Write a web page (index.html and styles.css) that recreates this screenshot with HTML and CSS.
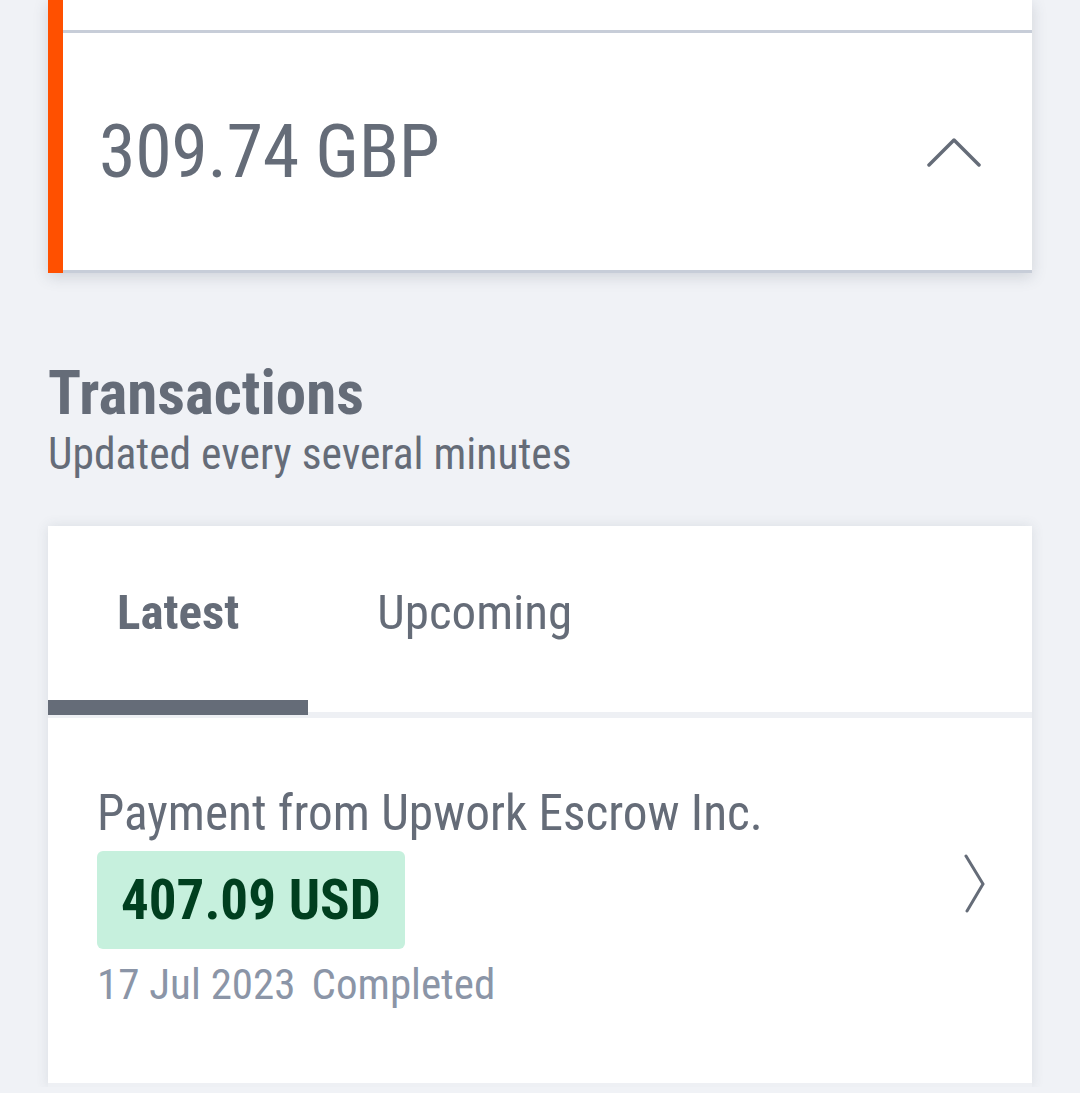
FILE: index.html
```html
<!DOCTYPE html>
<html lang="en">
<head>
  <meta charset="UTF-8" />
  <title>Balance</title>
  <link rel="stylesheet" href="styles.css">
</head>
<body>
<div class="page">
  <div class="balance-card">
    <div class="balance-inner">
      <div class="card-top"></div>
      <div class="balance-row">
        <span class="balance-amount">309.74 GBP</span>
        <svg class="chevron-up" width="56" height="32" viewBox="0 0 56 32">
          <polyline points="2,28 27,3 52,28" fill="none" stroke="#656c78" stroke-width="3.5" stroke-linecap="round" stroke-linejoin="round"/>
        </svg>
      </div>
    </div>
  </div>

  <h2 class="section-title">Transactions</h2>
  <div class="section-sub">Updated every several minutes</div>

  <div class="tx-card">
    <div class="tabs">
      <div class="tab active">Latest</div>
      <div class="tab">Upcoming</div>
    </div>
    <div class="tx-row">
      <div class="tx-info">
        <div class="tx-name">Payment from Upwork Escrow Inc.</div>
        <div class="tx-amount">407.09 USD</div>
        <div class="tx-meta">
          <span>17 Jul 2023</span>
          <span>Completed</span>
        </div>
      </div>
      <svg class="chevron-right" width="24" height="60" viewBox="0 0 24 60">
        <polyline points="3,2 20,30 4,57" fill="none" stroke="#656c78" stroke-width="3" stroke-linecap="round" stroke-linejoin="miter"/>
      </svg>
    </div>
  </div>
</div>
</body>
</html>
```

FILE: styles.css
```css
body {
  margin: 0;
  background: #f0f2f6;
  font-family: "Roboto Condensed", Roboto, "Liberation Sans", sans-serif;
  font-stretch: condensed;
  color: #656c78;
  overflow: hidden;
}
.page {
  padding: 0 48px;
}
.balance-card {
  background: #ff5000;
  padding-left: 15px;
  box-shadow: 0 4px 14px rgba(60, 70, 90, 0.18);
}
.balance-inner {
  background: #fff;
  border-bottom: 3px solid #c7cdd8;
}
.card-top {
  height: 30px;
  border-bottom: 3px solid #c7cdd8;
}
.balance-row {
  height: 237px;
  display: flex;
  align-items: center;
  justify-content: space-between;
  padding: 0 49px 0 36px;
}
.balance-amount {
  font-size: 74px;
  line-height: 90px;
  letter-spacing: -0.4px;
}
.chevron-up {
  margin-top: 2px;
}
.section-title {
  margin: 86px 0 0;
  font-size: 61px;
  line-height: 68px;
  font-weight: 700;
}
.section-sub {
  margin-top: 3px;
  font-size: 43.5px;
  line-height: 50px;
}
.tx-card {
  margin-top: 46px;
  background: #fff;
  box-shadow: 0 0 12px rgba(60, 70, 90, 0.12);
}
.tabs {
  display: flex;
  border-bottom: 6px solid #eef0f4;
}
.tab {
  position: relative;
  height: 186px;
  box-sizing: border-box;
  padding: 59px 69px 0;
  font-size: 49px;
  line-height: 56px;
}
.tab.active {
  font-weight: 700;
}
.tab.active::after {
  content: "";
  position: absolute;
  left: 0;
  right: 0;
  bottom: -3px;
  height: 15px;
  background: #656c78;
}
.tx-row {
  display: flex;
  justify-content: space-between;
  padding: 67px 45px 74px 49px;
  border-bottom: 4px solid #eef0f4;
}
.tx-name {
  font-size: 49.3px;
  line-height: 56px;
}
.tx-amount {
  display: inline-block;
  margin-top: 10px;
  padding: 0 24px;
  background: #c6f0dd;
  border-radius: 6px;
  color: #003f1f;
  font-size: 55px;
  line-height: 98px;
  font-weight: 700;
}
.tx-meta {
  margin-top: 10px;
  display: flex;
  gap: 16px;
  color: #8b95a7;
  font-size: 43px;
  line-height: 50px;
}
.chevron-right {
  margin-top: 69px;
}
```
